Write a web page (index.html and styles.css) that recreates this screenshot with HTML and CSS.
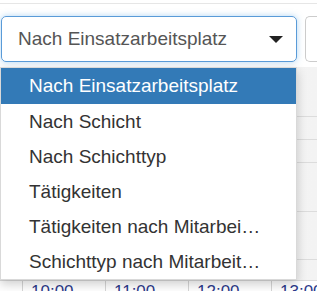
FILE: index.html
```html
<!DOCTYPE html>
<html lang="de">
<head>
  <meta charset="UTF-8" />
  <title>Planung</title>
  <link rel="stylesheet" href="styles.css">
</head>
<body>
  <div class="topbar"></div>
  <div class="toolbar">
    <div class="select">
      <span class="select-text">Nach Einsatzarbeitsplatz</span>
      <span class="caret"></span>
    </div>
    <div class="select-next"></div>
  </div>

  <div class="board">
    <div class="row r1"></div>
    <div class="row r2"></div>
    <div class="row r3"></div>
    <div class="row r4"></div>
    <div class="row r5"></div>
    <div class="row r6"></div>
    <div class="times">
      <div class="time">10:00</div>
      <div class="time">11:00</div>
      <div class="time">12:00</div>
      <div class="time">13:00</div>
    </div>
  </div>

  <ul class="dropdown">
    <li class="active">Nach Einsatzarbeitsplatz</li>
    <li>Nach Schicht</li>
    <li>Nach Schichttyp</li>
    <li>Tätigkeiten</li>
    <li>Tätigkeiten nach Mitarbei…</li>
    <li>Schichttyp nach Mitarbeit…</li>
  </ul>
</body>
</html>
```

FILE: styles.css
```css
body {
  margin: 0;
  font-family: "Liberation Sans", Arial, sans-serif;
  background: #fff;
  overflow: hidden;
  position: relative;
  height: 291px;
}
.topbar {
  height: 3px;
  border-bottom: 1px solid #e6e6e6;
}
.toolbar {
  display: flex;
  padding-top: 12px;
  gap: 8px;
}
.select {
  margin-left: 1px;
  width: 296px;
  height: 46px;
  box-sizing: border-box;
  border: 1px solid #5a9bd8;
  border-radius: 5px;
  box-shadow: 0 0 6px rgba(102, 175, 233, 0.5);
  display: flex;
  align-items: center;
  justify-content: space-between;
  padding: 0 13px 0 16px;
  font-size: 19px;
  color: #555;
}
.caret {
  width: 0;
  height: 0;
  border-left: 7.5px solid transparent;
  border-right: 7.5px solid transparent;
  border-top: 7px solid #222;
  margin-top: 1px;
}
.select-next {
  flex: 1;
  height: 46px;
  box-sizing: border-box;
  border: 1px solid #ccc;
  border-right: none;
  border-radius: 5px 0 0 5px;
}
.board {
  margin-top: 5px;
  background: linear-gradient(to right, #fafafa, #f3f3f3);
}
.row {
  border-bottom: 1px solid #dcdcdc;
}
.r1 { height: 49px; }
.r2 { height: 22px; }
.r3 { height: 22px; }
.r4 { height: 48px; }
.r5 { height: 47px; }
.r6 { height: 20px; }
.times {
  display: flex;
  background: #fff;
  padding-left: 22px;
  height: 12px;
}
.time {
  width: 83px;
  flex-shrink: 0;
  box-sizing: border-box;
  border-left: 1px solid #d6d6d6;
  padding-left: 8px;
  font-size: 17px;
  line-height: 22px;
  color: #2d3a8c;
}
.dropdown {
  position: absolute;
  top: 67px;
  left: 0;
  width: 297px;
  box-sizing: border-box;
  margin: 0;
  padding: 0;
  list-style: none;
  background: #fff;
  border: 1px solid rgba(0, 0, 0, 0.15);
  box-shadow: 0 4px 10px rgba(0, 0, 0, 0.2);
  font-size: 19px;
  color: #333;
}
.dropdown li {
  height: 35px;
  line-height: 35px;
  padding-left: 28px;
  white-space: nowrap;
}
.dropdown li.active {
  height: 36px;
  line-height: 36px;
  background: #337ab7;
  color: #fff;
}
```
